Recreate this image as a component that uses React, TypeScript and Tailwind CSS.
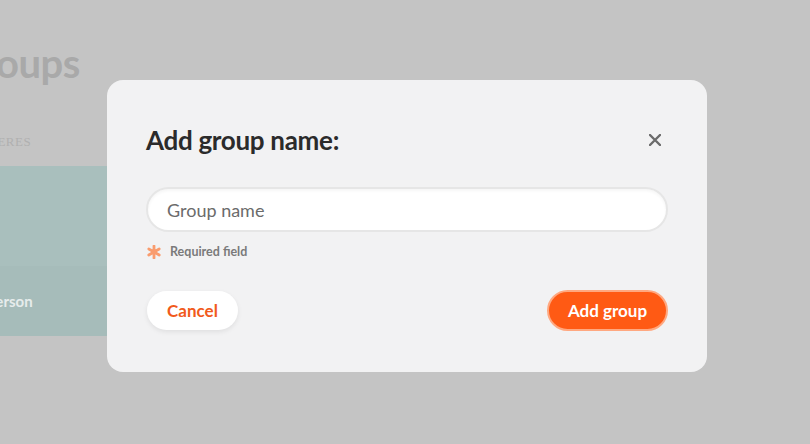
import React, { useState } from "react";

const App: React.FC = () => {
  const [name, setName] = useState("");

  return (
    <div className="relative w-[810px] h-[444px] overflow-hidden bg-[#c4c4c4] font-['Lato',sans-serif]">
      {/* page behind the modal */}
      <div className="flex flex-col">
        <h1 className="ml-[-46px] mt-[38px] h-[50px] text-[40px] font-bold leading-[50px] text-[#a9a9a9] tracking-[-0.5px]">
          Groups
        </h1>
        <div className="mt-[44px] ml-[-40px] text-[13px] tracking-[0.5px] text-[#b0b0b0] font-['Liberation_Serif',serif]">
          GENRERES
        </div>
        <div className="mt-[14px] w-[140px] h-[170px] flex flex-col">
          <div className="h-[100px] bg-[#a9bfbd]" />
          <div className="h-[70px] bg-[#a6bcba] flex items-start pt-[24px]">
            <span className="ml-[-32px] text-[15px] font-bold text-[#e6ecec]">Anderson</span>
          </div>
        </div>
      </div>

      {/* modal */}
      <div className="absolute inset-0 pl-[107px] pt-[80px]">
        <div className="w-[600px] h-[292px] rounded-[16px] bg-[#f2f2f3] px-[39px] pt-[40px]">
          <div className="flex items-center justify-between h-[40px]">
            <h2 className="text-[26px] font-bold text-[#2b2b2b] tracking-[-0.3px]">Add group name:</h2>
            <button className="mr-[4px] w-[18px] h-[18px] flex items-center justify-center">
              <svg width="12" height="12" viewBox="0 0 12 12">
                <path d="M1 1 L11 11 M11 1 L1 11" stroke="#6b6b6b" strokeWidth="2.4" strokeLinecap="round" />
              </svg>
            </button>
          </div>

          <input
            type="text"
            value={name}
            onChange={(e) => setName(e.target.value)}
            placeholder="Group name"
            className="mt-[27px] block w-[522px] h-[45px] rounded-full bg-white border-2 border-[#e6e6e6] px-[19px] text-[18px] text-[#333] placeholder:text-[#6b6b6b] shadow-[inset_0_2px_3px_rgba(0,0,0,0.04)] outline-none"
          />

          <div className="mt-[12px] flex items-center gap-[9px] h-[16px]">
            <svg width="14" height="14" viewBox="0 0 14 14" className="ml-[1px]">
              <path
                d="M7 1 L7 13 M1.8 4 L12.2 10 M12.2 4 L1.8 10"
                stroke="#f99c6e"
                strokeWidth="2.8"
                strokeLinecap="round"
              />
            </svg>
            <span className="text-[12.5px] font-bold text-[#7a7a7a]">Required field</span>
          </div>

          <div className="mt-[30px] flex items-center justify-between">
            <button className="w-[91px] h-[39px] ml-[1px] rounded-full bg-white text-[17px] font-bold text-[#f15a1c] shadow-[0_2px_5px_rgba(0,0,0,0.08)]">
              Cancel
            </button>
            <button className="w-[121px] h-[41px] rounded-full bg-[#ff5a14] border-2 border-[#ffa880] text-[17px] font-bold text-white">
              Add group
            </button>
          </div>
        </div>
      </div>
    </div>
  );
};

export default App;
